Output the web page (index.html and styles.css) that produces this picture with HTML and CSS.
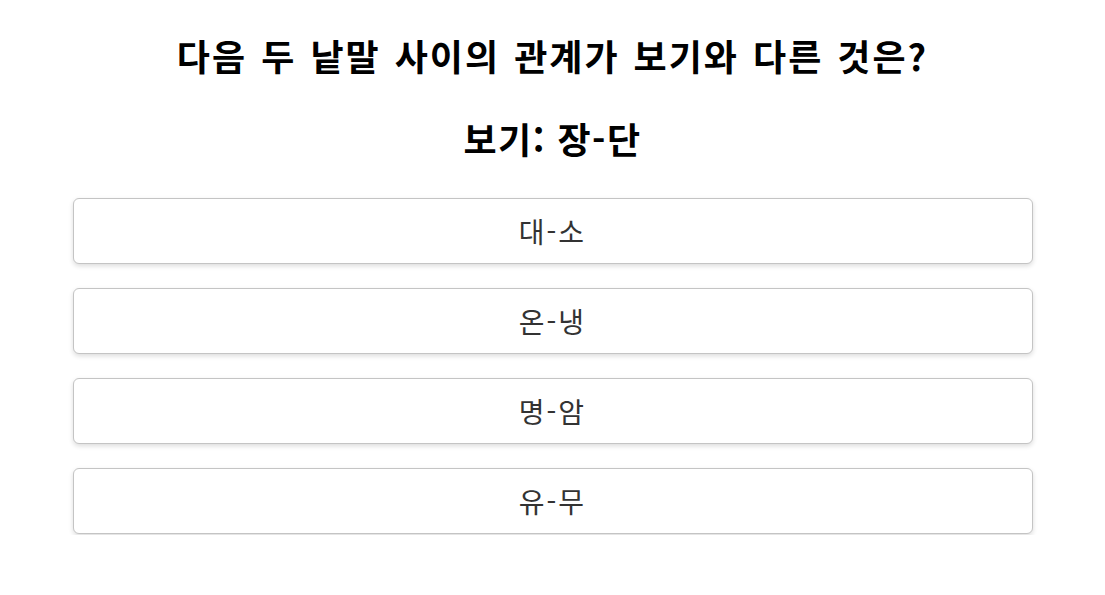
FILE: index.html
```html
<!DOCTYPE html>
<html lang="ko">
<head>
    <meta charset="UTF-8">
    <meta name="viewport" content="width=device-width, initial-scale=1.0">
    <title>퀴즈</title>
    <link rel="stylesheet" href="styles.css">
</head>
<body>
    <main class="quiz">
        <h1 class="question">다음 두 낱말 사이의 관계가 보기와 다른 것은?</h1>
        <h2 class="example">보기: 장-단</h2>
        <div class="options">
            <button class="option">대-소</button>
            <button class="option">온-냉</button>
            <button class="option">명-암</button>
            <button class="option">유-무</button>
        </div>
    </main>
</body>
</html>
```

FILE: styles.css
```css
body {
    font-family: "Noto Sans CJK KR", "Noto Sans", sans-serif;
    margin: 0;
    padding: 0;
    background-color: #fff;
    color: #000;
}

.quiz {
    max-width: 960px;
    margin: 0 auto;
    padding-top: 30px;
    text-align: center;
}

.question {
    font-size: 36px;
    font-weight: bold;
    letter-spacing: 2px;
    word-spacing: 2px;
    margin: 0;
    line-height: 50px;
}

.example {
    font-size: 36px;
    font-weight: bold;
    letter-spacing: 1.5px;
    margin: 33px 0 0;
    line-height: 50px;
}

.options {
    display: flex;
    flex-direction: column;
    gap: 23px;
    margin-top: 35px;
}

.option {
    height: 66px;
    margin-bottom: 1px;
    background-color: #fff;
    border: 1px solid #c4c4c4;
    border-radius: 6px;
    box-shadow: 0 2px 5px rgba(0, 0, 0, 0.14);
    font-family: inherit;
    font-size: 28px;
    letter-spacing: 2px;
    color: #333;
    cursor: pointer;
}
```
